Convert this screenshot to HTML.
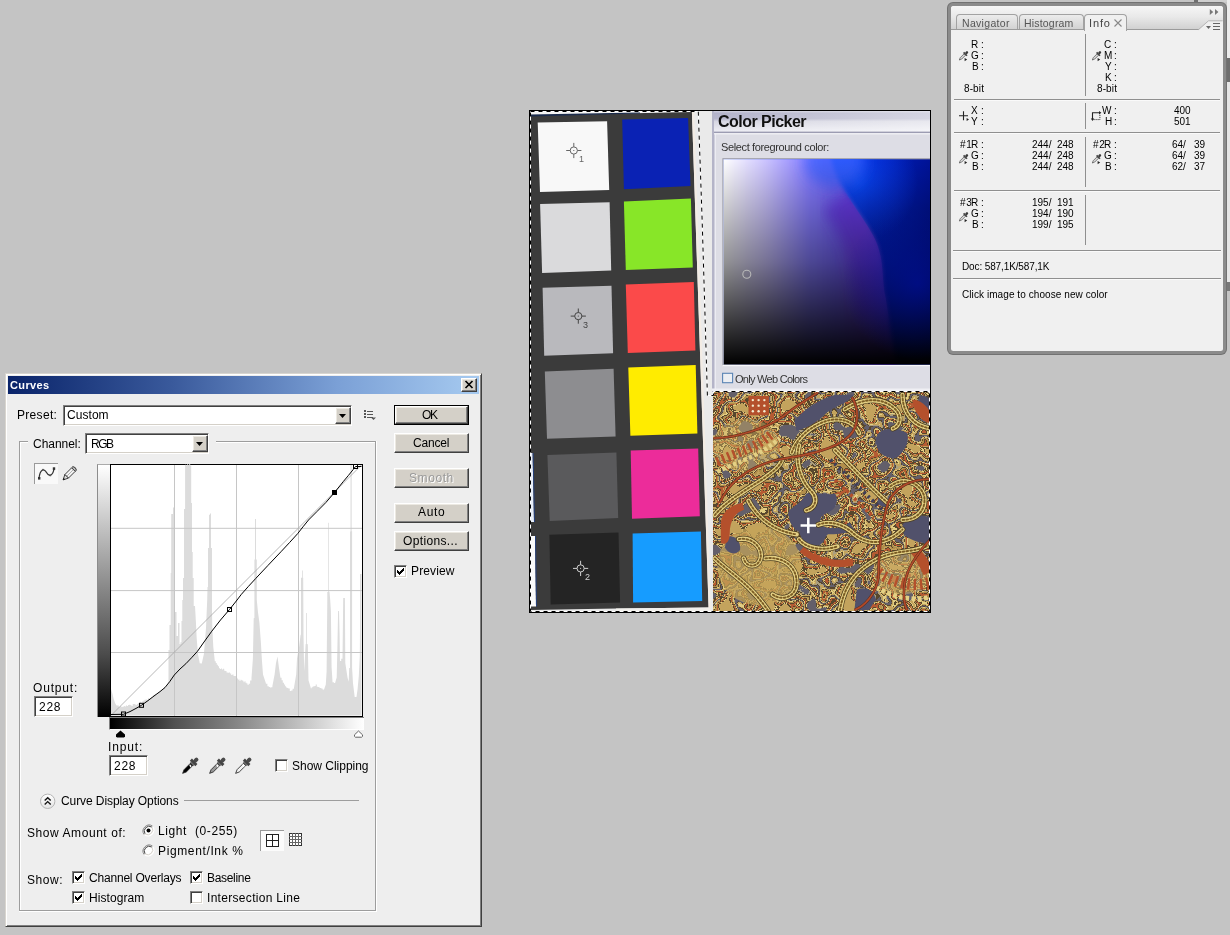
<!DOCTYPE html>
<html><head><meta charset="utf-8"><title>Curves</title>
<style>
html,body{margin:0;padding:0;}
body{width:1230px;height:935px;overflow:hidden;background:#c4c4c4;position:relative;font-family:"Liberation Sans",sans-serif;}
.t{position:absolute;white-space:pre;line-height:1;will-change:transform;font-family:"Liberation Sans",sans-serif;}
svg{position:absolute;overflow:visible;}
.btn{position:absolute;box-sizing:border-box;background:#d4d0c8;border:1px solid;border-color:#fff #404040 #404040 #fff;box-shadow:inset -1px -1px 0 #808080, inset 1px 1px 0 #ece9e2;}
.sunk{position:absolute;box-sizing:border-box;background:#fff;border:1px solid;border-color:#808080 #fff #fff #808080;box-shadow:inset 1px 1px 0 #404040, inset -1px -1px 0 #d4d0c8;}
.cb{position:absolute;box-sizing:border-box;width:13px;height:13px;background:#fff;border:1px solid;border-color:#808080 #fff #fff #808080;box-shadow:inset 1px 1px 0 #404040, inset -1px -1px 0 #d4d0c8;}
</style></head><body>
<!-- curves dialog -->
<div style="position:absolute;left:5px;top:373px;width:477px;height:554px;background:#eeeeee;box-sizing:border-box;border:1px solid;border-color:#d8d5cf #404040 #404040 #d8d5cf;box-shadow:inset 1px 1px 0 #fff, inset -1px -1px 0 #808080;"></div>
<div style="position:absolute;left:8px;top:376px;width:471px;height:18px;background:linear-gradient(to right,#0a246a 0%,#3a5a9c 35%,#7ba0d6 70%,#a6caf0 100%);"></div>
<span class="t" style="left:10.00px;top:380.00px;font-size:11px;color:#fff;letter-spacing:0.381px;font-weight:bold;">Curves</span>
<div class="btn" style="left:461px;top:378px;width:16px;height:14px;"></div>
<svg style="left:465px;top:381px" width="8" height="7" viewBox="0 0 8 7"><path d="M0.5,0 L7.5,7 M7.5,0 L0.5,7" stroke="#000" stroke-width="1.7" fill="none"/></svg>
<span class="t" style="left:17.00px;top:409.00px;font-size:12px;color:#000;letter-spacing:0.311px;">Preset:</span>
<div class="sunk" style="left:63px;top:405px;width:289px;height:21px;"></div>
<span class="t" style="left:67.00px;top:409.00px;font-size:12px;color:#000;letter-spacing:0.052px;">Custom</span>
<div class="btn" style="left:335px;top:407px;width:16px;height:17px;"></div>
<svg style="left:339px;top:414px" width="7" height="4" viewBox="0 0 7 4"><path d="M0,0H7L3.5,4Z" fill="#000"/></svg>
<svg style="left:364px;top:410px" width="13" height="10" viewBox="0 0 13 10" shape-rendering="crispEdges"><g fill="#555"><rect x="0" y="0" width="2" height="2"/><rect x="0" y="3" width="2" height="2"/><rect x="0" y="6" width="2" height="2"/><rect x="3" y="0.5" width="6" height="1"/><rect x="3" y="3.5" width="6" height="1"/><rect x="3" y="6.5" width="6" height="1"/></g><path d="M7,7.5H12L9.5,10Z" fill="#555" shape-rendering="auto"/></svg>
<div style="position:absolute;left:394px;top:405px;width:75px;height:20px;background:#000;"></div><div class="btn" style="left:395px;top:406px;width:73px;height:18px;"></div><span class="t" style="left:422.00px;top:409.00px;font-size:12px;color:#000;letter-spacing:-1.335px;">OK</span>
<div class="btn" style="left:394px;top:433px;width:75px;height:20px;"></div><span class="t" style="left:413.00px;top:437.00px;font-size:12px;color:#000;letter-spacing:-0.208px;">Cancel</span>
<div class="btn" style="left:394px;top:468px;width:75px;height:20px;"></div><span class="t" style="left:410.00px;top:473.00px;font-size:12px;color:#fff;letter-spacing:0.574px;">Smooth</span><span class="t" style="left:409.00px;top:472.00px;font-size:12px;color:#9a9a9a;letter-spacing:0.574px;">Smooth</span>
<div class="btn" style="left:394px;top:503px;width:75px;height:20px;"></div><span class="t" style="left:418.00px;top:506.00px;font-size:12px;color:#000;letter-spacing:0.648px;">Auto</span>
<div class="btn" style="left:394px;top:531px;width:75px;height:20px;"></div><span class="t" style="left:403.00px;top:535.00px;font-size:12px;color:#000;letter-spacing:0.346px;">Options...</span>
<div class="cb" style="left:394px;top:565px;"><svg style="left:2px;top:2px" width="7" height="7" viewBox="0 0 7 7" shape-rendering="crispEdges"><g fill="#000"><rect x="6" y="0" width="1" height="1"/><rect x="5" y="1" width="2" height="1"/><rect x="0" y="2" width="1" height="1"/><rect x="4" y="2" width="3" height="1"/><rect x="0" y="3" width="2" height="1"/><rect x="3" y="3" width="3" height="1"/><rect x="0" y="4" width="5" height="1"/><rect x="1" y="5" width="3" height="1"/><rect x="2" y="6" width="1" height="1"/></g></svg></div>
<span class="t" style="left:411.00px;top:565.00px;font-size:12px;color:#000;letter-spacing:0.129px;">Preview</span>
<div style="position:absolute;left:19px;top:441px;width:9px;height:1px;background:#9d9d9d;"></div>
<div style="position:absolute;left:20px;top:442px;width:8px;height:1px;background:#ffffff;"></div>
<div style="position:absolute;left:216px;top:441px;width:160px;height:1px;background:#9d9d9d;"></div>
<div style="position:absolute;left:216px;top:442px;width:159px;height:1px;background:#ffffff;"></div>
<div style="position:absolute;left:19px;top:441px;width:1px;height:470px;background:#9d9d9d;"></div>
<div style="position:absolute;left:20px;top:442px;width:1px;height:468px;background:#ffffff;"></div>
<div style="position:absolute;left:375px;top:441px;width:1px;height:470px;background:#9d9d9d;"></div>
<div style="position:absolute;left:376px;top:441px;width:1px;height:471px;background:#ffffff;"></div>
<div style="position:absolute;left:19px;top:910px;width:357px;height:1px;background:#9d9d9d;"></div>
<div style="position:absolute;left:19px;top:911px;width:358px;height:1px;background:#ffffff;"></div>
<span class="t" style="left:33.00px;top:438.00px;font-size:12px;color:#000;letter-spacing:-0.032px;">Channel:</span>
<div class="sunk" style="left:85px;top:433px;width:124px;height:21px;"></div>
<span class="t" style="left:91.00px;top:438.00px;font-size:12px;color:#000;letter-spacing:-1.444px;">RGB</span>
<div class="btn" style="left:192px;top:435px;width:16px;height:17px;"></div>
<svg style="left:196px;top:442px" width="7" height="4" viewBox="0 0 7 4"><path d="M0,0H7L3.5,4Z" fill="#000"/></svg>
<div style="position:absolute;left:34px;top:463px;width:24px;height:21px;background:#f9f9f9;box-sizing:border-box;border-top:1px solid #9a9a9a;border-left:1px solid #9a9a9a;"></div>
<svg style="left:37px;top:467px" width="19" height="14" viewBox="0 0 19 14"><path d="M2,11.5 C3,2 7,1 9.5,5.5 C12,10 16,9 17,1.5" stroke="#333" stroke-width="1.3" fill="none"/><rect x="1" y="10" width="2.4" height="2.6" fill="#333"/><rect x="15.8" y="0.3" width="2.4" height="2.6" fill="#333"/><circle cx="6" cy="2.6" r="0.9" fill="#555"/><circle cx="13.4" cy="8.4" r="0.9" fill="#555"/></svg>
<svg style="left:61px;top:465px" width="17" height="17" viewBox="0 0 17 17"><g transform="rotate(45 8.5 8.5)"><path d="M6,1.2 Q8.5,-0.6 11,1.2 V3 H6Z" fill="#bbb" stroke="#333" stroke-width="0.9"/><rect x="6" y="3" width="5" height="9.5" fill="#f4f4f4" stroke="#333" stroke-width="0.9"/><path d="M6,12.5 H11 L8.5,17.6Z" fill="#ddd" stroke="#333" stroke-width="0.9"/><path d="M7.7,15.8 L9.3,15.8 L8.5,17.6Z" fill="#000"/><line x1="8.5" y1="3.5" x2="8.5" y2="12" stroke="#999" stroke-width="0.7"/></g></svg>
<span class="t" style="left:33.00px;top:682.00px;font-size:12px;color:#000;letter-spacing:0.835px;">Output:</span>
<div class="sunk" style="left:34px;top:696px;width:39px;height:21px;"></div>
<span class="t" style="left:39.00px;top:701.00px;font-size:12px;color:#000;letter-spacing:0.703px;">228</span>
<span class="t" style="left:108.00px;top:741.00px;font-size:12px;color:#000;letter-spacing:0.877px;">Input:</span>
<div class="sunk" style="left:109px;top:755px;width:39px;height:21px;"></div>
<span class="t" style="left:114.00px;top:760.00px;font-size:12px;color:#000;letter-spacing:0.703px;">228</span>
<div style="position:absolute;left:97px;top:464px;width:13px;height:253px;background:linear-gradient(to bottom,#fff 0%,#c2c2c2 25%,#868686 50%,#4c4c4c 75%,#000 100%);box-sizing:border-box;border-left:1px solid #8c8c8c;border-top:1px solid #aaa;"></div>
<div style="position:absolute;left:109px;top:717px;width:255px;height:13px;background:linear-gradient(to right,#000 0%,#505050 25%,#868686 50%,#c2c2c2 75%,#fff 100%);box-sizing:border-box;border-top:1px solid #808080;border-left:1px solid #808080;border-bottom:1px solid #fff;"></div>
<div style="position:absolute;left:110px;top:464px;width:253px;height:253px;background:#fff;box-sizing:border-box;border:1px solid #000;"></div>
<svg style="left:0;top:0" width="1230" height="935" viewBox="0 0 1230 935"><polygon points="111.0,715.5 111.0,689.0 112.5,694.0 113.7,699.0 115.0,703.0 116.5,705.6 116.5,705.4 117.7,705.4 117.7,705.5 118.8,705.5 118.8,707.1 120.0,707.1 120.0,707.0 120.0,706.1 121.3,706.1 121.3,707.1 122.5,707.1 122.5,706.7 123.8,706.7 123.8,707.0 123.8,705.9 124.8,705.9 124.8,706.6 125.9,706.6 125.9,705.4 127.0,705.4 127.0,706.0 128.0,706.0 128.0,706.0 128.0,704.9 129.2,704.9 129.2,704.7 130.4,704.7 130.4,705.2 131.5,705.2 131.5,705.9 132.7,705.9 132.7,704.1 133.9,704.1 133.9,704.8 133.9,704.0 134.9,704.0 134.9,704.6 135.9,704.6 135.9,705.0 136.9,705.0 136.9,703.9 138.0,703.9 138.0,703.2 139.0,703.2 139.0,704.2 140.0,704.2 140.0,703.0 140.0,701.7 141.2,701.7 141.2,703.0 142.3,703.0 142.3,701.2 143.4,701.2 143.4,700.4 144.6,700.4 144.6,699.8 145.8,699.8 145.8,699.6 146.9,699.6 146.9,699.8 146.9,700.2 147.9,700.2 147.9,698.3 148.9,698.3 148.9,698.6 149.9,698.6 149.9,698.2 151.0,698.2 151.0,697.1 152.0,697.1 152.0,696.9 153.0,696.9 153.0,695.3 154.0,695.3 154.0,696.0 154.0,694.7 155.0,694.7 155.0,694.2 156.0,694.2 156.0,694.5 157.0,694.5 157.0,693.2 158.0,693.2 158.0,692.2 159.0,692.2 159.0,692.1 160.0,692.1 160.0,691.5 160.0,691.0 161.0,691.0 161.0,689.9 162.0,689.9 162.0,690.1 163.0,690.1 163.0,689.1 164.0,689.1 164.0,687.3 165.0,687.3 165.0,687.5 165.0,686.9 166.2,686.9 166.2,685.3 167.3,685.3 167.3,684.6 168.5,684.6 168.5,683.0 168.5,650.0 169.5,650.0 169.5,625.0 170.7,625.0 170.7,573.0 171.2,573.0 171.2,514.0 173.0,514.0 173.0,507.0 173.0,507.5 174.0,507.5 174.0,506.5 175.0,506.5 175.0,507.0 175.0,612.0 176.5,612.0 176.5,636.0 178.0,636.0 178.0,623.0 179.5,623.0 179.5,643.0 179.5,644.1 180.5,644.1 180.5,642.2 181.5,642.2 181.5,643.0 181.5,621.0 182.3,621.0 182.3,600.0 183.0,600.0 183.0,578.0 184.0,578.0 184.0,509.0 185.1,509.0 185.1,465.0 185.1,464.8 186.1,464.8 186.1,465.6 187.1,465.6 187.1,464.2 188.1,464.2 188.1,465.0 189.2,465.0 189.2,464.0 190.2,464.0 190.2,465.4 191.2,465.4 191.2,465.0 191.2,503.0 192.0,503.0 192.0,552.0 192.7,552.0 192.7,578.0 193.7,578.0 193.7,606.0 195.0,606.0 196.0,624.0 196.7,638.4 198.0,654.3 199.6,662.2 199.6,663.2 200.6,663.2 200.6,663.5 201.7,663.5 201.7,663.7 203.9,654.0 206.0,628.0 207.2,600.0 207.5,587.0 208.0,587.0 208.0,548.0 209.0,548.0 209.0,514.0 209.0,514.8 210.0,514.8 210.0,513.6 211.0,513.6 211.0,514.0 211.0,548.0 212.0,548.0 212.0,612.0 212.3,628.0 213.3,647.0 214.7,660.0 214.7,661.3 215.8,661.3 215.8,662.9 216.8,662.9 216.8,664.7 217.9,664.7 217.9,666.3 219.0,666.3 219.0,667.3 219.0,668.3 220.0,668.3 220.0,669.1 221.0,669.1 221.0,668.6 222.0,668.6 222.0,669.6 223.0,669.6 223.0,669.5 223.0,668.8 224.2,668.8 224.2,670.7 225.3,670.7 225.3,671.1 226.5,671.1 226.5,672.4 227.7,672.4 227.7,671.6 227.7,672.7 228.9,672.7 228.9,672.4 230.0,672.4 230.0,673.5 231.2,673.5 231.2,675.1 232.3,675.1 232.3,674.5 233.5,674.5 233.5,676.0 233.5,676.1 234.7,676.1 234.7,676.0 235.8,676.0 235.8,676.3 237.0,676.3 237.0,677.4 238.5,680.3 238.5,679.4 239.5,679.4 239.5,681.1 240.5,681.1 240.5,679.8 241.5,679.8 241.5,680.2 242.5,680.2 242.5,680.7 243.5,680.7 243.5,681.0 243.5,682.2 244.5,682.2 244.5,681.2 245.5,681.2 245.5,682.7 246.6,682.7 246.6,683.6 247.6,683.6 247.6,685.1 248.6,685.1 248.6,684.6 248.6,683.7 250.1,683.7 250.1,680.5 251.5,680.5 251.5,678.0 252.9,658.6 253.7,618.2 254.4,618.0 254.4,559.6 255.0,559.6 255.0,519.0 256.0,519.0 256.0,559.6 256.8,559.6 256.8,600.0 258.0,612.4 259.4,622.5 260.9,642.8 261.9,660.0 263.0,674.5 265.9,683.2 265.9,683.8 267.4,683.8 267.4,686.2 268.8,686.2 268.8,687.5 268.8,686.9 270.0,686.9 270.0,687.6 271.2,687.6 271.2,687.3 272.4,687.3 272.4,686.0 274.6,674.5 276.0,663.0 277.5,656.5 278.9,667.3 280.4,677.4 280.4,677.8 281.6,677.8 281.6,680.3 282.8,680.3 282.8,682.8 284.0,682.8 284.0,684.6 284.0,684.6 285.1,684.6 285.1,686.2 286.1,686.2 286.1,687.5 287.2,687.5 287.2,687.9 288.3,687.9 288.3,689.0 288.3,688.6 289.8,688.6 289.8,690.9 291.2,690.9 291.2,691.8 291.2,690.4 292.6,690.4 292.6,688.7 294.0,688.7 294.0,687.5 296.2,674.5 297.0,658.6 299.1,647.0 300.6,634.8 301.0,634.8 301.0,577.7 302.0,577.7 302.0,570.5 302.8,570.5 302.8,577.7 303.2,577.7 303.5,634.8 304.2,671.6 305.6,644.2 306.0,644.0 306.0,613.0 306.8,613.0 306.8,644.0 307.8,644.2 308.5,680.3 310.7,687.5 310.7,688.3 311.7,688.3 311.7,687.3 312.7,687.3 312.7,686.4 313.7,686.4 313.7,686.2 314.7,686.2 314.7,685.9 315.7,685.9 315.7,685.3 315.7,684.5 316.8,684.5 316.8,686.7 317.9,686.7 317.9,686.9 318.9,686.9 318.9,687.4 320.0,687.4 320.0,686.8 320.0,688.1 321.2,688.1 321.2,688.4 322.5,688.4 322.5,689.6 323.7,689.6 323.7,690.4 325.8,684.6 326.6,671.6 327.3,600.0 327.3,592.0 328.0,592.0 329.5,591.5 330.2,600.0 330.9,611.0 331.6,667.3 332.6,683.2 332.6,682.2 333.9,682.2 333.9,683.0 335.2,683.0 335.2,682.5 336.7,677.4 337.4,647.0 338.1,611.0 339.0,611.0 339.6,634.8 340.0,663.0 340.0,660.9 341.2,660.9 341.2,658.7 342.5,658.7 342.5,658.6 343.2,599.4 343.2,598.0 344.9,598.0 345.3,663.0 347.5,677.4 348.7,681.7 349.2,668.0 350.0,668.0 350.0,532.0 350.0,531.4 351.1,531.4 351.1,531.3 352.1,531.3 352.1,532.0 352.1,668.0 353.0,683.2 354.7,697.0 356.5,697.0 357.6,689.0 358.8,676.0 359.8,655.7 360.0,628.0 360.0,574.0 361.5,574.0 361.5,715.5" fill="#dcdcdc"/><rect x="328" y="522.8" width="1" height="70" fill="#dcdcdc" fill-opacity="0.75"/><rect x="350.4" y="465" width="1.4" height="68" fill="#dcdcdc" fill-opacity="0.8"/><line x1="174.5" y1="465" x2="174.5" y2="716" stroke="#c6c6c6" stroke-width="1"/><line x1="236.5" y1="465" x2="236.5" y2="716" stroke="#c6c6c6" stroke-width="1"/><line x1="298.5" y1="465" x2="298.5" y2="716" stroke="#c6c6c6" stroke-width="1"/><line x1="111" y1="528.3" x2="362" y2="528.3" stroke="#c6c6c6" stroke-width="1"/><line x1="111" y1="590.6" x2="362" y2="590.6" stroke="#c6c6c6" stroke-width="1"/><line x1="111" y1="652.5" x2="362" y2="652.5" stroke="#c6c6c6" stroke-width="1"/><line x1="111" y1="715.5" x2="361.5" y2="465" stroke="#a4a4a4" stroke-width="0.8"/><polyline points="111.0,714.5 123.5,714.3 130.0,711.6 136.0,708.4 141.5,705.3 148.0,700.6 154.0,696.0 160.0,691.6 165.0,687.5 169.8,681.5 174.3,675.0 180.0,669.0 185.9,663.7 191.5,657.8 197.4,651.4 204.0,642.0 211.8,631.2 220.5,620.0 229.5,609.5 235.5,602.0 241.4,594.3 248.5,586.3 255.8,578.4 268.0,565.4 281.0,551.7 289.5,542.6 297.7,533.6 303.0,526.8 308.5,520.0 317.2,511.3 325.8,502.6 334.5,492.5 343.2,481.7 348.3,475.6 353.3,469.4 355.5,466.5 361.5,466.5" fill="none" stroke="#000" stroke-width="1.0" stroke-linejoin="round"/><rect x="121.5" y="712.0" width="4" height="4" fill="none" stroke="#000" stroke-width="1"/><rect x="139.5" y="703.3" width="4" height="4" fill="none" stroke="#000" stroke-width="1"/><rect x="227.5" y="607.5" width="4" height="4" fill="none" stroke="#000" stroke-width="1"/><rect x="353.5" y="464.5" width="4" height="4" fill="none" stroke="#000" stroke-width="1"/><rect x="332" y="490" width="5" height="5" fill="#000"/><path d="M120.5,730.4 L125,734.6 V736.4 L124,737.5 H117 L116,736.4 V734.6 Z" fill="#000"/><path d="M358.5,731 L362.5,734.8 V736.4 L361.6,737.2 H355.4 L354.5,736.4 V734.8 Z" fill="#fff" stroke="#555" stroke-width="0.9"/></svg>
<svg style="left:182px;top:757px" width="17" height="17" viewBox="0 0 17 17"><g transform="rotate(45 8.5 8.5)"><rect x="6.6" y="-1.8" width="3.8" height="5" rx="1.6" fill="#4a4a4a"/><rect x="4.6" y="2.6" width="7.8" height="3" fill="#444"/><rect x="6.2" y="5.2" width="4.6" height="2" fill="#666"/><path d="M6.9,7 H10.1 V16 L8.5,19.6 L6.9,16 Z" fill="#000" stroke="#222" stroke-width="0.8"/><path d="M7.3,8 H9.7 V10 L7.3,9 Z" fill="#fff"/></g></svg>
<svg style="left:208.5px;top:757px" width="17" height="17" viewBox="0 0 17 17"><g transform="rotate(45 8.5 8.5)"><rect x="6.6" y="-1.8" width="3.8" height="5" rx="1.6" fill="#4a4a4a"/><rect x="4.6" y="2.6" width="7.8" height="3" fill="#444"/><rect x="6.2" y="5.2" width="4.6" height="2" fill="#666"/><path d="M6.9,7 H10.1 V16 L8.5,19.6 L6.9,16 Z" fill="#9a9a9a" stroke="#222" stroke-width="0.8"/><path d="M7.3,8 H9.7 V10 L7.3,9 Z" fill="#fff"/></g></svg>
<svg style="left:235px;top:757px" width="17" height="17" viewBox="0 0 17 17"><g transform="rotate(45 8.5 8.5)"><rect x="6.6" y="-1.8" width="3.8" height="5" rx="1.6" fill="#4a4a4a"/><rect x="4.6" y="2.6" width="7.8" height="3" fill="#444"/><rect x="6.2" y="5.2" width="4.6" height="2" fill="#666"/><path d="M6.9,7 H10.1 V16 L8.5,19.6 L6.9,16 Z" fill="#f4f4f4" stroke="#222" stroke-width="0.8"/><path d="M7.3,8 H9.7 V10 L7.3,9 Z" fill="#fff"/></g></svg>
<div class="cb" style="left:275px;top:759px;"></div>
<span class="t" style="left:292.00px;top:760.00px;font-size:12px;color:#000;letter-spacing:-0.016px;">Show Clipping</span>
<svg style="left:39px;top:793px" width="17" height="17" viewBox="0 0 17 17"><defs><linearGradient id="cg" x1="0" y1="0" x2="0" y2="1"><stop offset="0" stop-color="#fff"/><stop offset="1" stop-color="#e4e4e4"/></linearGradient></defs><circle cx="8.7" cy="8.3" r="7.2" fill="url(#cg)" stroke="#b4b4b4" stroke-width="1"/><path d="M5.7,7.6 L8.7,4.8 L11.7,7.6 M5.7,11.4 L8.7,8.6 L11.7,11.4" stroke="#111" stroke-width="1.4" fill="none"/></svg>
<span class="t" style="left:61.00px;top:795.00px;font-size:12px;color:#000;letter-spacing:-0.087px;">Curve Display Options</span>
<div style="position:absolute;left:184px;top:800px;width:175px;height:1px;background:#9d9d9d;"></div>
<span class="t" style="left:27.00px;top:827.00px;font-size:12px;color:#000;letter-spacing:0.566px;">Show Amount of:</span>
<svg style="left:142px;top:823.5px" width="13" height="13" viewBox="0 0 13 13"><circle cx="6.5" cy="6.5" r="5.6" fill="#fff"/><path d="M2.3,10.7 A6,6 0 0 1 10.7,2.3" stroke="#808080" stroke-width="1" fill="none"/><path d="M3.1,9.9 A4.9,4.9 0 0 1 9.9,3.1" stroke="#404040" stroke-width="1" fill="none"/><path d="M10.7,2.3 A6,6 0 0 1 2.3,10.7" stroke="#fff" stroke-width="1" fill="none"/><path d="M9.9,3.1 A4.9,4.9 0 0 1 3.1,9.9" stroke="#d4d0c8" stroke-width="1" fill="none"/><circle cx="6.5" cy="6.5" r="2" fill="#000"/></svg>
<svg style="left:142px;top:843.5px" width="13" height="13" viewBox="0 0 13 13"><circle cx="6.5" cy="6.5" r="5.6" fill="#fff"/><path d="M2.3,10.7 A6,6 0 0 1 10.7,2.3" stroke="#808080" stroke-width="1" fill="none"/><path d="M3.1,9.9 A4.9,4.9 0 0 1 9.9,3.1" stroke="#404040" stroke-width="1" fill="none"/><path d="M10.7,2.3 A6,6 0 0 1 2.3,10.7" stroke="#fff" stroke-width="1" fill="none"/><path d="M9.9,3.1 A4.9,4.9 0 0 1 3.1,9.9" stroke="#d4d0c8" stroke-width="1" fill="none"/></svg>
<span class="t" style="left:158.00px;top:825.00px;font-size:12px;color:#000;letter-spacing:0.605px;">Light  (0-255)</span>
<span class="t" style="left:158.00px;top:845.00px;font-size:12px;color:#000;letter-spacing:0.629px;">Pigment/Ink %</span>
<div style="position:absolute;left:260px;top:830px;width:24px;height:21px;background:#fbfbfb;box-sizing:border-box;border-top:1px solid #9a9a9a;border-left:1px solid #9a9a9a;"></div>
<svg style="left:266px;top:834px" width="13" height="13" viewBox="0 0 13 13" shape-rendering="crispEdges"><rect x="0.5" y="0.5" width="12" height="12" fill="#fff" stroke="#222"/><path d="M6.5,0V13M0,6.5H13" stroke="#222"/></svg>
<svg style="left:289px;top:833px" width="13" height="13" viewBox="0 0 13 13" shape-rendering="crispEdges"><rect x="0.5" y="0.5" width="12" height="12" fill="#fff" stroke="#333"/><path d="M3.5,0V13M6.5,0V13M9.5,0V13M0,3.5H13M0,6.5H13M0,9.5H13" stroke="#666"/></svg>
<span class="t" style="left:27.00px;top:874.00px;font-size:12px;color:#000;letter-spacing:0.572px;">Show:</span>
<div class="cb" style="left:72px;top:871px;"><svg style="left:2px;top:2px" width="7" height="7" viewBox="0 0 7 7" shape-rendering="crispEdges"><g fill="#000"><rect x="6" y="0" width="1" height="1"/><rect x="5" y="1" width="2" height="1"/><rect x="0" y="2" width="1" height="1"/><rect x="4" y="2" width="3" height="1"/><rect x="0" y="3" width="2" height="1"/><rect x="3" y="3" width="3" height="1"/><rect x="0" y="4" width="5" height="1"/><rect x="1" y="5" width="3" height="1"/><rect x="2" y="6" width="1" height="1"/></g></svg></div>
<span class="t" style="left:89.00px;top:872.00px;font-size:12px;color:#000;letter-spacing:-0.195px;">Channel Overlays</span>
<div class="cb" style="left:72px;top:891px;"><svg style="left:2px;top:2px" width="7" height="7" viewBox="0 0 7 7" shape-rendering="crispEdges"><g fill="#000"><rect x="6" y="0" width="1" height="1"/><rect x="5" y="1" width="2" height="1"/><rect x="0" y="2" width="1" height="1"/><rect x="4" y="2" width="3" height="1"/><rect x="0" y="3" width="2" height="1"/><rect x="3" y="3" width="3" height="1"/><rect x="0" y="4" width="5" height="1"/><rect x="1" y="5" width="3" height="1"/><rect x="2" y="6" width="1" height="1"/></g></svg></div>
<span class="t" style="left:89.00px;top:892.00px;font-size:12px;color:#000;letter-spacing:0.062px;">Histogram</span>
<div class="cb" style="left:190px;top:871px;"><svg style="left:2px;top:2px" width="7" height="7" viewBox="0 0 7 7" shape-rendering="crispEdges"><g fill="#000"><rect x="6" y="0" width="1" height="1"/><rect x="5" y="1" width="2" height="1"/><rect x="0" y="2" width="1" height="1"/><rect x="4" y="2" width="3" height="1"/><rect x="0" y="3" width="2" height="1"/><rect x="3" y="3" width="3" height="1"/><rect x="0" y="4" width="5" height="1"/><rect x="1" y="5" width="3" height="1"/><rect x="2" y="6" width="1" height="1"/></g></svg></div>
<span class="t" style="left:207.00px;top:872.00px;font-size:12px;color:#000;letter-spacing:-0.316px;">Baseline</span>
<div class="cb" style="left:190px;top:891px;"></div>
<span class="t" style="left:207.00px;top:892.00px;font-size:12px;color:#000;letter-spacing:0.306px;">Intersection Line</span>
<!-- info panel -->
<div style="position:absolute;left:1198px;top:0px;width:29px;height:2px;background:#cfcfcf;"></div>
<div style="position:absolute;left:1194px;top:0px;width:4px;height:6px;background:#6f6f6f;"></div>
<div style="position:absolute;left:1227px;top:0px;width:3px;height:58px;background:#ececec;"></div>
<div style="position:absolute;left:1227px;top:58px;width:3px;height:24px;background:#6e6e6e;"></div>
<div style="position:absolute;left:1227px;top:82px;width:3px;height:200px;background:#e6e6e6;"></div>
<div style="position:absolute;left:1227px;top:282px;width:3px;height:9px;background:#787878;"></div>
<div style="position:absolute;left:947px;top:2px;width:280px;height:353px;background:#727272;border-radius:6px;"></div>
<div style="position:absolute;left:948px;top:3px;width:278px;height:351px;background:#8b8b8b;border-radius:5px;"></div>
<div style="position:absolute;left:950.7px;top:5.7px;width:272.3px;height:345.5px;background:#f0f0f0;border-radius:2.5px;"></div>
<div style="position:absolute;left:950.7px;top:5.7px;width:272.3px;height:24.3px;background:linear-gradient(to bottom,#f6f6f6 0%,#e9e9e9 45%,#cfcfcf 100%);border-radius:2.5px 2.5px 0 0;"></div>
<div style="position:absolute;left:950.7px;top:29px;width:248.5px;height:1px;background:#9b9b9b;"></div>
<svg style="left:0;top:0" width="1230" height="40" viewBox="0 0 1230 40"><path d="M1198.5,30 L1208.5,20.6 H1223 V30 Z" fill="#f0f0f0"/><path d="M1198.5,29.6 L1208.5,20.8 H1222.6" fill="none" stroke="#b5b5b5" stroke-width="1"/><path d="M1209.8,9 L1213.2,12 L1209.8,15 Z M1215,9 L1218.4,12 L1215,15 Z" fill="#777"/><path d="M1206,26 H1211 L1208.5,29 Z" fill="#666"/><path d="M1213,23.5 H1220 M1213,26.5 H1220 M1213,29.5 H1220" stroke="#666" stroke-width="1"/></svg>
<div style="position:absolute;left:956px;top:14px;width:62px;height:15px;box-sizing:border-box;background:linear-gradient(to bottom,#ececec,#d2d2d2);border:1px solid #a2a2a2;border-bottom:none;border-radius:4px 4px 0 0;"></div>
<div style="position:absolute;left:1018.5px;top:14px;width:65px;height:15px;box-sizing:border-box;background:linear-gradient(to bottom,#ececec,#d2d2d2);border:1px solid #a2a2a2;border-bottom:none;border-radius:4px 4px 0 0;"></div>
<div style="position:absolute;left:1083.5px;top:14px;width:43px;height:16.5px;box-sizing:border-box;background:#f0f0f0;border:1px solid #a2a2a2;border-bottom:none;border-radius:4px 4px 0 0;"></div>
<span class="t" style="left:962.00px;top:18.00px;font-size:10.5px;color:#555;letter-spacing:0.313px;">Navigator</span>
<span class="t" style="left:1024.00px;top:18.00px;font-size:10.5px;color:#555;letter-spacing:0.189px;">Histogram</span>
<span class="t" style="left:1089.00px;top:18.00px;font-size:11px;color:#444;letter-spacing:0.877px;">Info</span>
<svg style="left:1114px;top:18.5px" width="8" height="8" viewBox="0 0 8 8"><path d="M0.5,0.5 L7.5,7.5 M7.5,0.5 L0.5,7.5" stroke="#888" stroke-width="1.1"/></svg>
<div style="position:absolute;left:954px;top:99px;width:266px;height:1px;background:#8f8f8f;"></div><div style="position:absolute;left:954px;top:100px;width:266px;height:1px;background:#fafafa;"></div>
<div style="position:absolute;left:954px;top:132px;width:266px;height:1px;background:#8f8f8f;"></div><div style="position:absolute;left:954px;top:133px;width:266px;height:1px;background:#fafafa;"></div>
<div style="position:absolute;left:954px;top:190px;width:266px;height:1px;background:#8f8f8f;"></div><div style="position:absolute;left:954px;top:191px;width:266px;height:1px;background:#fafafa;"></div>
<div style="position:absolute;left:953px;top:250px;width:268px;height:1px;background:#8f8f8f;"></div><div style="position:absolute;left:953px;top:251px;width:268px;height:1px;background:#fafafa;"></div>
<div style="position:absolute;left:953px;top:278px;width:268px;height:1px;background:#8f8f8f;"></div><div style="position:absolute;left:953px;top:279px;width:268px;height:1px;background:#fafafa;"></div>
<div style="position:absolute;left:1085px;top:34px;width:1px;height:62px;background:#8f8f8f;"></div>
<div style="position:absolute;left:1085px;top:103px;width:1px;height:26px;background:#8f8f8f;"></div>
<div style="position:absolute;left:1085px;top:137px;width:1px;height:50px;background:#8f8f8f;"></div>
<div style="position:absolute;left:1085px;top:195px;width:1px;height:50px;background:#8f8f8f;"></div>
<span class="t" style="left:971px;top:40px;font-size:10px;color:#000;">R</span><span class="t" style="left:981.00px;top:40.00px;font-size:10px;color:#000;">:</span>
<span class="t" style="left:971px;top:51px;font-size:10px;color:#000;">G</span><span class="t" style="left:981.00px;top:51.00px;font-size:10px;color:#000;">:</span>
<span class="t" style="left:972px;top:62px;font-size:10px;color:#000;">B</span><span class="t" style="left:981.00px;top:62.00px;font-size:10px;color:#000;">:</span>
<span class="t" style="left:1104px;top:40px;font-size:10px;color:#000;">C</span><span class="t" style="left:1114.00px;top:40.00px;font-size:10px;color:#000;">:</span>
<span class="t" style="left:1104px;top:51px;font-size:10px;color:#000;">M</span><span class="t" style="left:1114.00px;top:51.00px;font-size:10px;color:#000;">:</span>
<span class="t" style="left:1105px;top:62px;font-size:10px;color:#000;">Y</span><span class="t" style="left:1114.00px;top:62.00px;font-size:10px;color:#000;">:</span>
<span class="t" style="left:1105px;top:73px;font-size:10px;color:#000;">K</span><span class="t" style="left:1114.00px;top:73.00px;font-size:10px;color:#000;">:</span>
<span class="t" style="left:964.00px;top:84.00px;font-size:10px;color:#000;letter-spacing:0.114px;">8-bit</span>
<span class="t" style="left:1097.00px;top:84.00px;font-size:10px;color:#000;letter-spacing:0.114px;">8-bit</span>
<span class="t" style="left:971px;top:106px;font-size:10px;color:#000;">X</span><span class="t" style="left:981.00px;top:106.00px;font-size:10px;color:#000;">:</span>
<span class="t" style="left:971px;top:117px;font-size:10px;color:#000;">Y</span><span class="t" style="left:981.00px;top:117.00px;font-size:10px;color:#000;">:</span>
<span class="t" style="left:1102px;top:106px;font-size:10px;color:#000;">W</span><span class="t" style="left:1114.00px;top:106.00px;font-size:10px;color:#000;">:</span>
<span class="t" style="left:1105px;top:117px;font-size:10px;color:#000;">H</span><span class="t" style="left:1114.00px;top:117.00px;font-size:10px;color:#000;">:</span>
<span class="t" style="left:1174px;top:106px;font-size:10px;color:#000;">400</span>
<span class="t" style="left:1174px;top:117px;font-size:10px;color:#000;">501</span>
<span class="t" style="left:960.00px;top:140.00px;font-size:10px;color:#000;letter-spacing:0.710px;">#1</span><span class="t" style="left:971px;top:140px;font-size:10px;color:#000;">R</span><span class="t" style="left:981.00px;top:140.00px;font-size:10px;color:#000;">:</span><span class="t" style="left:1032px;top:140px;font-size:10px;color:#000;">244/</span><span class="t" style="left:1057px;top:140px;font-size:10px;color:#000;">248</span><span class="t" style="left:971px;top:151px;font-size:10px;color:#000;">G</span><span class="t" style="left:981.00px;top:151.00px;font-size:10px;color:#000;">:</span><span class="t" style="left:1032px;top:151px;font-size:10px;color:#000;">244/</span><span class="t" style="left:1057px;top:151px;font-size:10px;color:#000;">248</span><span class="t" style="left:972px;top:162px;font-size:10px;color:#000;">B</span><span class="t" style="left:981.00px;top:162.00px;font-size:10px;color:#000;">:</span><span class="t" style="left:1032px;top:162px;font-size:10px;color:#000;">244/</span><span class="t" style="left:1057px;top:162px;font-size:10px;color:#000;">248</span>
<span class="t" style="left:1093.00px;top:140.00px;font-size:10px;color:#000;letter-spacing:0.725px;">#2</span><span class="t" style="left:1104px;top:140px;font-size:10px;color:#000;">R</span><span class="t" style="left:1114.00px;top:140.00px;font-size:10px;color:#000;">:</span><span class="t" style="left:1172px;top:140px;font-size:10px;color:#000;">64/</span><span class="t" style="left:1194px;top:140px;font-size:10px;color:#000;">39</span><span class="t" style="left:1104px;top:151px;font-size:10px;color:#000;">G</span><span class="t" style="left:1114.00px;top:151.00px;font-size:10px;color:#000;">:</span><span class="t" style="left:1172px;top:151px;font-size:10px;color:#000;">64/</span><span class="t" style="left:1194px;top:151px;font-size:10px;color:#000;">39</span><span class="t" style="left:1105px;top:162px;font-size:10px;color:#000;">B</span><span class="t" style="left:1114.00px;top:162.00px;font-size:10px;color:#000;">:</span><span class="t" style="left:1172px;top:162px;font-size:10px;color:#000;">62/</span><span class="t" style="left:1194px;top:162px;font-size:10px;color:#000;">37</span>
<span class="t" style="left:960.00px;top:198.00px;font-size:10px;color:#000;letter-spacing:0.662px;">#3</span><span class="t" style="left:971px;top:198px;font-size:10px;color:#000;">R</span><span class="t" style="left:981.00px;top:198.00px;font-size:10px;color:#000;">:</span><span class="t" style="left:1032px;top:198px;font-size:10px;color:#000;">195/</span><span class="t" style="left:1057px;top:198px;font-size:10px;color:#000;">191</span><span class="t" style="left:971px;top:209px;font-size:10px;color:#000;">G</span><span class="t" style="left:981.00px;top:209.00px;font-size:10px;color:#000;">:</span><span class="t" style="left:1032px;top:209px;font-size:10px;color:#000;">194/</span><span class="t" style="left:1057px;top:209px;font-size:10px;color:#000;">190</span><span class="t" style="left:972px;top:220px;font-size:10px;color:#000;">B</span><span class="t" style="left:981.00px;top:220.00px;font-size:10px;color:#000;">:</span><span class="t" style="left:1032px;top:220px;font-size:10px;color:#000;">199/</span><span class="t" style="left:1057px;top:220px;font-size:10px;color:#000;">195</span>
<span class="t" style="left:962.00px;top:262.00px;font-size:10px;color:#000;letter-spacing:-0.122px;">Doc: 587,1K/587,1K</span>
<span class="t" style="left:962.00px;top:290.00px;font-size:10px;color:#000;letter-spacing:0.076px;">Click image to choose new color</span>
<svg style="left:958.3px;top:51px" width="12" height="12" viewBox="0 0 12 12"><g transform="translate(0.2,0) rotate(45 5 5)"><rect x="3.9" y="-1.4" width="2.4" height="3" rx="1.1" fill="#3a3a3a"/><rect x="2.7" y="1.3" width="4.8" height="1.7" fill="#444"/><path d="M4.1,3 H6.1 V8.3 L5.1,10.6 L4.1,8.3 Z" fill="#d8d8d8" stroke="#555" stroke-width="0.7"/></g><path d="M6.6,6.9 L9.2,8.6 L6.6,10.3 Z" fill="#222"/></svg>
<svg style="left:1091px;top:51px" width="12" height="12" viewBox="0 0 12 12"><g transform="translate(0.2,0) rotate(45 5 5)"><rect x="3.9" y="-1.4" width="2.4" height="3" rx="1.1" fill="#3a3a3a"/><rect x="2.7" y="1.3" width="4.8" height="1.7" fill="#444"/><path d="M4.1,3 H6.1 V8.3 L5.1,10.6 L4.1,8.3 Z" fill="#d8d8d8" stroke="#555" stroke-width="0.7"/></g><path d="M6.6,6.9 L9.2,8.6 L6.6,10.3 Z" fill="#222"/></svg>
<svg style="left:958.3px;top:153.5px" width="12" height="12" viewBox="0 0 12 12"><g transform="translate(0.2,0) rotate(45 5 5)"><rect x="3.9" y="-1.4" width="2.4" height="3" rx="1.1" fill="#3a3a3a"/><rect x="2.7" y="1.3" width="4.8" height="1.7" fill="#444"/><path d="M4.1,3 H6.1 V8.3 L5.1,10.6 L4.1,8.3 Z" fill="#d8d8d8" stroke="#555" stroke-width="0.7"/></g><path d="M6.6,6.9 L9.2,8.6 L6.6,10.3 Z" fill="#222"/></svg>
<svg style="left:1091px;top:153.5px" width="12" height="12" viewBox="0 0 12 12"><g transform="translate(0.2,0) rotate(45 5 5)"><rect x="3.9" y="-1.4" width="2.4" height="3" rx="1.1" fill="#3a3a3a"/><rect x="2.7" y="1.3" width="4.8" height="1.7" fill="#444"/><path d="M4.1,3 H6.1 V8.3 L5.1,10.6 L4.1,8.3 Z" fill="#d8d8d8" stroke="#555" stroke-width="0.7"/></g><path d="M6.6,6.9 L9.2,8.6 L6.6,10.3 Z" fill="#222"/></svg>
<svg style="left:958.3px;top:211.5px" width="12" height="12" viewBox="0 0 12 12"><g transform="translate(0.2,0) rotate(45 5 5)"><rect x="3.9" y="-1.4" width="2.4" height="3" rx="1.1" fill="#3a3a3a"/><rect x="2.7" y="1.3" width="4.8" height="1.7" fill="#444"/><path d="M4.1,3 H6.1 V8.3 L5.1,10.6 L4.1,8.3 Z" fill="#d8d8d8" stroke="#555" stroke-width="0.7"/></g><path d="M6.6,6.9 L9.2,8.6 L6.6,10.3 Z" fill="#222"/></svg>
<svg style="left:958px;top:110px" width="13" height="13" viewBox="0 0 13 13"><path d="M5.5,1.3 V10.3 M1,5.8 H10" stroke="#222" stroke-width="1.1"/><path d="M8.6,8 L11,9.5 L8.6,11 Z" fill="#222"/></svg>
<svg style="left:1091px;top:111px" width="12" height="11" viewBox="0 0 12 11"><path d="M1.5,8.2 V1.7 H8.6" stroke="#222" stroke-width="1.1" fill="none"/><path d="M2.6,8.6 H8.9 V3" stroke="#222" stroke-width="1" stroke-dasharray="1,1" fill="none"/><path d="M8,0 L10.4,1.7 L8,3.4 Z M-0.2,7.6 H3.2 L1.5,10 Z" fill="#222"/></svg>
<!-- image -->
<div style="position:absolute;left:529px;top:110px;width:402px;height:503px;background:#000;"></div>
<div style="position:absolute;left:530px;top:111px;width:400px;height:501px;background:#eaeaea;overflow:hidden;"><svg style="left:-530px;top:-111px" width="1230" height="935" viewBox="0 0 1230 935"><defs><linearGradient id="cpw" x1="0" y1="0" x2="1" y2="0"><stop offset="0" stop-color="#ffffff"/><stop offset="0.18" stop-color="#d8d0ff"/><stop offset="0.36" stop-color="#7f7cff"/><stop offset="0.52" stop-color="#1a52ff"/><stop offset="0.62" stop-color="#0038f0"/><stop offset="0.75" stop-color="#0020c8"/><stop offset="1" stop-color="#0012a4"/></linearGradient><linearGradient id="cpk" x1="0" y1="0" x2="0" y2="1"><stop offset="0" stop-color="#000" stop-opacity="0"/><stop offset="0.35" stop-color="#000" stop-opacity="0.42"/><stop offset="0.7" stop-color="#000" stop-opacity="0.8"/><stop offset="1" stop-color="#000" stop-opacity="1"/></linearGradient><radialGradient id="cpp" cx="0.62" cy="0.42" r="0.42"><stop offset="0" stop-color="#5a189e" stop-opacity="0.85"/><stop offset="0.6" stop-color="#4a1a90" stop-opacity="0.45"/><stop offset="1" stop-color="#40208a" stop-opacity="0"/></radialGradient><linearGradient id="cpt" x1="0" y1="0" x2="0" y2="1"><stop offset="0" stop-color="#d2d2e0"/><stop offset="0.1" stop-color="#b2b2ca"/><stop offset="0.36" stop-color="#b6b6cc"/><stop offset="0.5" stop-color="#d6d6e2"/><stop offset="1" stop-color="#eeeef4"/></linearGradient><linearGradient id="cpt2" x1="0" y1="0" x2="1" y2="0"><stop offset="0" stop-color="#fff" stop-opacity="0"/><stop offset="1" stop-color="#fff" stop-opacity="0.45"/></linearGradient></defs><polygon points="530,114 691.9,111.5 708.6,607.5 616,608.4 530,610" fill="#3b3b3b"/><polygon points="530,111 691.9,111 691.9,112 530,115.5" fill="#f4f4f4"/><polygon points="530,114.6 640,112.6 640,113.6 530,116.4" fill="#1c2c4c"/><polygon points="691.9,111 694.1,111 710.8,608 708.6,608" fill="#f3ece4"/><polygon points="530,453 532.6,453 534,522 530,522" fill="#e8eef8"/><polygon points="532.6,453 533.6,453 535,522 534,522" fill="#27407a"/><polygon points="530,536 535,536 536,606.5 530,606.5" fill="#fafafa"/><polygon points="535,536 536,536 537,606.5 536,606.5" fill="#27407a"/><polygon points="616,608.4 708.8,607.5 712,611.5 616,611.5" fill="#f2f0ec"/><polygon points="537.7,122.6 607.1,121.3 609.2,189.9 540.0,192.0" fill="#f8f8f8" /><polygon points="622.2,119.6 688.1,118.0 690.5,186.0 623.9,189.2" fill="#0a22b4" /><polygon points="540.1,203.9 609.6,202.3 611.2,270.6 542.1,273.0" fill="#dadadc" /><polygon points="623.9,201.5 690.9,198.6 692.8,267.4 625.8,270.1" fill="#88e628" /><polygon points="542.6,287.7 611.5,285.7 613.1,353.2 544.2,355.8" fill="#b9b9bd" /><polygon points="625.8,284.4 693.8,282.0 695.4,350.4 627.8,352.9" fill="#fb4a4a" /><polygon points="544.8,371.6 613.6,368.8 615.6,436.6 547.0,438.7" fill="#8d8d90" /><polygon points="628.3,367.5 695.7,365.1 697.4,433.4 630.4,435.8" fill="#ffec00" /><polygon points="547.4,455.0 616.4,452.4 618.2,518.0 549.7,520.9" fill="#5a5a5c" /><polygon points="630.7,450.4 698.2,448.5 699.8,516.3 632.0,518.8" fill="#ec2c9a" /><polygon points="549.4,534.7 618.5,532.6 620.1,602.5 550.7,604.6" fill="#242424" /><polygon points="632.6,533.4 700.9,531.5 702.2,600.9 633.1,602.5" fill="#169cff" /><g stroke="#666" stroke-width="1" fill="none"><circle cx="573.8" cy="150.5" r="3.6"/><path d="M570.2,150.5 h-4 M577.4,150.5 h4 M573.8,146.9 v-4 M573.8,154.1 v4"/></g><rect x="573.3" y="150.0" width="1" height="1" fill="#666"/><g stroke="#444" stroke-width="1" fill="none"><circle cx="578.3" cy="316.1" r="3.6"/><path d="M574.7,316.1 h-4 M581.9,316.1 h4 M578.3,312.5 v-4 M578.3,319.7 v4"/></g><rect x="577.8" y="315.6" width="1" height="1" fill="#444"/><g stroke="#d0d0d0" stroke-width="1" fill="none"><circle cx="580.6" cy="568.4" r="3.6"/><path d="M577.0,568.4 h-4 M584.2,568.4 h4 M580.6,564.8 v-4 M580.6,572.0 v4"/></g><rect x="580.1" y="567.9" width="1" height="1" fill="#d0d0d0"/><rect x="712" y="111" width="219" height="281" fill="#dddde5"/><rect x="712" y="111" width="3" height="281" fill="#b4b4c8"/><rect x="714.5" y="133" width="1.5" height="258" fill="#ececf2"/><rect x="714" y="111" width="217" height="21" fill="url(#cpt)"/><rect x="714" y="111" width="217" height="21" fill="url(#cpt2)"/><rect x="714" y="131.6" width="217" height="1.6" fill="#9c9cb2"/><rect x="714" y="133.2" width="217" height="1.2" fill="#f4f4f8"/><rect x="712" y="388.5" width="219" height="2.5" fill="#efeff4"/><rect x="722.4" y="158.2" width="209" height="207.6" fill="#9a9aa6"/><defs><linearGradient id="fb" gradientUnits="userSpaceOnUse" x1="15" y1="0" x2="915" y2="0"><stop offset="0" stop-color="#3060ff"/><stop offset="0.50" stop-color="#1050ff"/><stop offset="0.58" stop-color="#0844f8"/><stop offset="0.70" stop-color="#0024c8"/><stop offset="0.86" stop-color="#001aac"/><stop offset="1" stop-color="#001296"/></linearGradient><linearGradient id="fl" gradientUnits="userSpaceOnUse" x1="15" y1="0" x2="760" y2="0"><stop offset="0" stop-color="#ffffff"/><stop offset="0.25" stop-color="#cbc3ff"/><stop offset="0.50" stop-color="#857cff"/><stop offset="0.66" stop-color="#6f60f4"/><stop offset="0.85" stop-color="#6a44e8"/><stop offset="1" stop-color="#5a2cd8"/></linearGradient><linearGradient id="fk" gradientUnits="userSpaceOnUse" x1="0" y1="18" x2="0" y2="912"><stop offset="0" stop-color="#000" stop-opacity="0"/><stop offset="0.5" stop-color="#000" stop-opacity="0.42"/><stop offset="1" stop-color="#000" stop-opacity="1"/></linearGradient><radialGradient id="fglow" gradientUnits="userSpaceOnUse" cx="860" cy="560" r="330"><stop offset="0" stop-color="#0010b0" stop-opacity="0.55"/><stop offset="1" stop-color="#0010b0" stop-opacity="0"/></radialGradient><radialGradient id="fglow2" gradientUnits="userSpaceOnUse" cx="600" cy="120" r="260"><stop offset="0" stop-color="#0a4cff" stop-opacity="0.9"/><stop offset="0.5" stop-color="#0a40f0" stop-opacity="0.5"/><stop offset="1" stop-color="#0a40f0" stop-opacity="0"/></radialGradient><clipPath id="fleft"><path d="M-20,-20 L478,-20 C490,120 600,230 660,340 C720,440 700,540 720,620 L770,950 L-20,950 Z"/></clipPath><filter id="fblur2" x="-50%" y="-50%" width="200%" height="200%"><feGaussianBlur stdDeviation="30"/></filter><clipPath id="fclip"><rect x="15" y="18" width="900" height="894"/></clipPath><filter id="fblur" x="-10%" y="-10%" width="120%" height="120%"><feGaussianBlur stdDeviation="9"/></filter></defs><g transform="translate(720,155) scale(0.22995)"><g clip-path="url(#fclip)"><rect x="15" y="18" width="900" height="894" fill="url(#fb)"/><rect x="15" y="18" width="900" height="894" fill="url(#fglow2)"/><path filter="url(#fblur)" d="M-20,-20 L478,-20 C490,120 600,230 660,340 C720,440 700,540 720,620 L770,950 L-20,950 Z" fill="url(#fl)"/><path filter="url(#fblur2)" d="M520,190 C570,260 620,340 640,420 C660,500 670,580 690,700" fill="none" stroke="#6636e6" stroke-opacity="0.85" stroke-width="170" clip-path="url(#fleft)"/><ellipse cx="500" cy="30" rx="130" ry="110" fill="#3a62ff" fill-opacity="0.75" filter="url(#fblur2)"/><rect x="15" y="18" width="900" height="894" fill="url(#fk)"/><rect x="15" y="18" width="900" height="894" fill="url(#fglow)"/></g></g><rect x="722.4" y="365" width="209" height="1.2" fill="#f8f8fa"/><circle cx="746.8" cy="274.3" r="4" fill="none" stroke="#b8b8b8" stroke-width="1.1"/><rect x="722.6" y="373.3" width="10" height="9.4" fill="#eceef2" stroke="#5a84b4" stroke-width="1.1"/><defs><filter id="pzn" x="0" y="0" width="100%" height="100%" color-interpolation-filters="sRGB"><feTurbulence type="fractalNoise" baseFrequency="0.05" numOctaves="2" seed="11"/><feColorMatrix type="matrix" values="1 0 0 0 0  1 0 0 0 0  1 0 0 0 0  0 0 0 0 1"/><feComponentTransfer><feFuncR type="linear" slope="2.3" intercept="-0.65"/><feFuncG type="linear" slope="2.3" intercept="-0.65"/><feFuncB type="linear" slope="2.3" intercept="-0.65"/></feComponentTransfer><feComponentTransfer><feFuncR type="discrete" tableValues="0.769 0.769 0.282 0.910 0.282 0.769 0.706 0.706 0.282 0.690 0.690 0.282 0.910 0.769 0.659 0.282 0.333 0.333 0.282 0.769 0.910 0.282 0.706 0.706 0.282 0.769 0.690 0.282 0.910 0.769 0.282 0.659 0.333"/><feFuncG type="discrete" tableValues="0.643 0.643 0.227 0.839 0.227 0.643 0.314 0.314 0.227 0.549 0.549 0.227 0.839 0.643 0.627 0.227 0.333 0.333 0.227 0.643 0.839 0.227 0.314 0.314 0.227 0.643 0.549 0.227 0.839 0.643 0.227 0.627 0.333"/><feFuncB type="discrete" tableValues="0.361 0.361 0.149 0.541 0.149 0.361 0.173 0.173 0.149 0.282 0.282 0.149 0.541 0.361 0.518 0.149 0.427 0.427 0.149 0.361 0.541 0.149 0.173 0.173 0.149 0.361 0.282 0.149 0.541 0.361 0.149 0.518 0.427"/></feComponentTransfer></filter></defs><rect x="713" y="392" width="218" height="220" fill="#fff" filter="url(#pzn)"/><g transform="translate(710,390) scale(0.2406)"><clipPath id="pzc"><rect x="12" y="8" width="905" height="910"/></clipPath><g clip-path="url(#pzc)"><ellipse cx="205" cy="730" rx="175" ry="165" fill="#c6a659" fill-opacity="0.72"/><ellipse cx="800" cy="760" rx="120" ry="90" fill="#d2b468" fill-opacity="0.5"/><ellipse cx="150" cy="230" rx="140" ry="110" fill="#d0b062" fill-opacity="0.45"/><rect x="12" y="8" width="905" height="910" fill="#c0a060" fill-opacity="0.14"/><path d="M400,430 C440,420 480,440 520,430 C540,470 520,500 470,520 C450,540 455,560 480,570 C520,580 560,570 580,550 L600,580 C560,600 520,600 490,600 C470,620 480,640 440,650 C400,650 380,620 370,590 C340,570 320,540 330,500 C350,480 380,470 400,430 Z" fill="#51516b"/><path d="M350,130 C390,80 450,40 520,20 L600,20 C570,60 510,70 480,100 C440,140 400,160 360,170 Z" fill="#51516b"/><path d="M700,180 C730,150 790,160 820,180 C830,220 810,250 780,280 C750,290 710,270 700,250 C685,225 688,195 700,180 Z" fill="#51516b"/><path d="M800,560 C830,520 890,515 917,530 L917,640 C880,640 830,625 805,600 Z" fill="#51516b"/><path d="M610,830 C640,815 680,830 690,870 L660,915 L600,915 Z" fill="#51516b"/><path d="M70,610 C100,600 130,625 125,665 C105,690 75,680 62,655 Z" fill="#51516b"/><path d="M700,445 C725,438 750,452 750,478 C728,492 705,485 695,468 Z" fill="#51516b"/><path d="M870,25 C895,15 917,35 917,60 L917,110 C885,100 870,70 870,25 Z" fill="#51516b"/><path d="M45,560 C45,505 90,478 135,468 L142,498 C108,508 82,540 82,598 C82,634 62,645 45,636 Z" fill="#b4502c"/><path d="M160,25 H245 V105 H160 Z" fill="#b4502c"/><path d="M840,40 C875,40 917,75 917,110 L917,140 C875,132 848,90 840,40 Z" fill="#b4502c"/><path d="M390,650 C445,700 520,715 595,700 L595,730 C512,748 428,722 372,672 Z" fill="#b4502c"/><path d="M850,650 C885,668 917,705 917,755 L888,770 C868,728 850,692 832,675 Z" fill="#b4502c"/><path d="M340,260 C360,200 420,150 480,130 C540,110 600,130 620,180" fill="none" stroke="#4c3c1e" stroke-width="24" stroke-linecap="round"/><path d="M340,260 C360,200 420,150 480,130 C540,110 600,130 620,180" fill="none" stroke="#e4d084" stroke-width="18" stroke-linecap="round"/><path d="M340,260 C360,200 420,150 480,130 C540,110 600,130 620,180" fill="none" stroke="#7a5c24" stroke-width="8" stroke-dasharray="7 9" stroke-linecap="round"/><path d="M370,230 C350,300 380,380 420,420 C450,450 440,490 400,500" fill="none" stroke="#4c3c1e" stroke-width="24" stroke-linecap="round"/><path d="M370,230 C350,300 380,380 420,420 C450,450 440,490 400,500" fill="none" stroke="#e4d084" stroke-width="18" stroke-linecap="round"/><path d="M370,230 C350,300 380,380 420,420 C450,450 440,490 400,500" fill="none" stroke="#7a5c24" stroke-width="8" stroke-dasharray="7 9" stroke-linecap="round"/><path d="M450,560 C500,540 560,560 600,600 C660,650 740,640 800,580" fill="none" stroke="#4c3c1e" stroke-width="24" stroke-linecap="round"/><path d="M450,560 C500,540 560,560 600,600 C660,650 740,640 800,580" fill="none" stroke="#e4d084" stroke-width="18" stroke-linecap="round"/><path d="M450,560 C500,540 560,560 600,600 C660,650 740,640 800,580" fill="none" stroke="#7a5c24" stroke-width="8" stroke-dasharray="7 9" stroke-linecap="round"/><path d="M520,250 C600,330 680,420 740,470" fill="none" stroke="#4c3c1e" stroke-width="24" stroke-linecap="round"/><path d="M520,250 C600,330 680,420 740,470" fill="none" stroke="#e4d084" stroke-width="18" stroke-linecap="round"/><path d="M520,250 C600,330 680,420 740,470" fill="none" stroke="#7a5c24" stroke-width="8" stroke-dasharray="7 9" stroke-linecap="round"/><path d="M20,520 C60,470 140,420 220,370 C260,340 290,320 300,290" fill="none" stroke="#4c3c1e" stroke-width="24" stroke-linecap="round"/><path d="M20,520 C60,470 140,420 220,370 C260,340 290,320 300,290" fill="none" stroke="#e4d084" stroke-width="18" stroke-linecap="round"/><path d="M20,520 C60,470 140,420 220,370 C260,340 290,320 300,290" fill="none" stroke="#7a5c24" stroke-width="8" stroke-dasharray="7 9" stroke-linecap="round"/><path d="M370,620 C400,660 470,670 530,650" fill="none" stroke="#4c3c1e" stroke-width="24" stroke-linecap="round"/><path d="M370,620 C400,660 470,670 530,650" fill="none" stroke="#e4d084" stroke-width="18" stroke-linecap="round"/><path d="M370,620 C400,660 470,670 530,650" fill="none" stroke="#7a5c24" stroke-width="8" stroke-dasharray="7 9" stroke-linecap="round"/><path d="M560,80 C640,30 720,30 770,80 C800,110 790,150 760,160" fill="none" stroke="#4c3c1e" stroke-width="24" stroke-linecap="round"/><path d="M560,80 C640,30 720,30 770,80 C800,110 790,150 760,160" fill="none" stroke="#e4d084" stroke-width="18" stroke-linecap="round"/><path d="M560,80 C640,30 720,30 770,80 C800,110 790,150 760,160" fill="none" stroke="#7a5c24" stroke-width="8" stroke-dasharray="7 9" stroke-linecap="round"/><path d="M800,20 C800,100 850,150 917,160" fill="none" stroke="#4c3c1e" stroke-width="24" stroke-linecap="round"/><path d="M800,20 C800,100 850,150 917,160" fill="none" stroke="#e4d084" stroke-width="18" stroke-linecap="round"/><path d="M800,20 C800,100 850,150 917,160" fill="none" stroke="#7a5c24" stroke-width="8" stroke-dasharray="7 9" stroke-linecap="round"/><path d="M750,400 C800,360 870,380 890,440 C900,500 860,540 800,540" fill="none" stroke="#4c3c1e" stroke-width="24" stroke-linecap="round"/><path d="M750,400 C800,360 870,380 890,440 C900,500 860,540 800,540" fill="none" stroke="#e4d084" stroke-width="18" stroke-linecap="round"/><path d="M750,400 C800,360 870,380 890,440 C900,500 860,540 800,540" fill="none" stroke="#7a5c24" stroke-width="8" stroke-dasharray="7 9" stroke-linecap="round"/><path d="M540,915 C560,800 620,740 700,700 C780,660 860,680 917,640" fill="none" stroke="#4c3c1e" stroke-width="24" stroke-linecap="round"/><path d="M540,915 C560,800 620,740 700,700 C780,660 860,680 917,640" fill="none" stroke="#e4d084" stroke-width="18" stroke-linecap="round"/><path d="M540,915 C560,800 620,740 700,700 C780,660 860,680 917,640" fill="none" stroke="#7a5c24" stroke-width="8" stroke-dasharray="7 9" stroke-linecap="round"/><path d="M160,460 C200,540 280,590 360,600" fill="none" stroke="#4c3c1e" stroke-width="24" stroke-linecap="round"/><path d="M160,460 C200,540 280,590 360,600" fill="none" stroke="#e4d084" stroke-width="18" stroke-linecap="round"/><path d="M160,460 C200,540 280,590 360,600" fill="none" stroke="#7a5c24" stroke-width="8" stroke-dasharray="7 9" stroke-linecap="round"/><path d="M20,700 C80,760 160,800 240,915" fill="none" stroke="#4c3c1e" stroke-width="24" stroke-linecap="round"/><path d="M20,700 C80,760 160,800 240,915" fill="none" stroke="#e4d084" stroke-width="18" stroke-linecap="round"/><path d="M20,700 C80,760 160,800 240,915" fill="none" stroke="#7a5c24" stroke-width="8" stroke-dasharray="7 9" stroke-linecap="round"/><path d="M230,700 C300,690 360,730 360,800 C360,860 300,880 260,850" fill="none" stroke="#4c3c1e" stroke-width="24" stroke-linecap="round"/><path d="M230,700 C300,690 360,730 360,800 C360,860 300,880 260,850" fill="none" stroke="#e4d084" stroke-width="18" stroke-linecap="round"/><path d="M230,700 C300,690 360,730 360,800 C360,860 300,880 260,850" fill="none" stroke="#7a5c24" stroke-width="8" stroke-dasharray="7 9" stroke-linecap="round"/><path d="M120,620 C170,610 220,650 210,700 C200,740 150,740 140,700" fill="none" stroke="#4c3c1e" stroke-width="24" stroke-linecap="round"/><path d="M120,620 C170,610 220,650 210,700 C200,740 150,740 140,700" fill="none" stroke="#e4d084" stroke-width="18" stroke-linecap="round"/><path d="M120,620 C170,610 220,650 210,700 C200,740 150,740 140,700" fill="none" stroke="#7a5c24" stroke-width="8" stroke-dasharray="7 9" stroke-linecap="round"/><path d="M500,290 C580,360 660,450 720,500" fill="none" stroke="#3e3e58" stroke-width="16" stroke-dasharray="10 14"/><path d="M470,330 C540,390 620,470 680,530" fill="none" stroke="#b4502c" stroke-width="14" stroke-dasharray="12 10"/><path d="M30,300 C100,260 180,250 260,180" fill="none" stroke="#b4502c" stroke-width="40" stroke-dasharray="10 14"/><path d="M30,340 C110,300 200,280 290,200" fill="none" stroke="#e4d084" stroke-width="18" stroke-dasharray="14 10"/><path d="M700,760 C760,800 840,820 917,800" fill="none" stroke="#b4502c" stroke-width="46" stroke-dasharray="10 16"/><path d="M690,820 C760,860 840,880 917,860" fill="none" stroke="#e4d084" stroke-width="20" stroke-dasharray="16 10"/><path d="M15,200 C100,200 250,160 330,90 C380,50 420,30 450,10" fill="none" stroke="#5a2a18" stroke-width="11"/><path d="M15,200 C100,200 250,160 330,90 C380,50 420,30 450,10" fill="none" stroke="#b04a2a" stroke-width="7"/><path d="M40,470 C80,380 160,320 280,290 C400,270 520,250 580,190 C620,150 620,80 590,30" fill="none" stroke="#5a2a18" stroke-width="11"/><path d="M40,470 C80,380 160,320 280,290 C400,270 520,250 580,190 C620,150 620,80 590,30" fill="none" stroke="#b04a2a" stroke-width="7"/><path d="M917,370 C840,370 770,400 740,470 C710,560 700,700 700,780 C690,850 640,900 600,915" fill="none" stroke="#5a2a18" stroke-width="11"/><path d="M917,370 C840,370 770,400 740,470 C710,560 700,700 700,780 C690,850 640,900 600,915" fill="none" stroke="#b04a2a" stroke-width="7"/><path d="M917,620 C860,680 820,740 810,800 C800,860 810,900 820,915" fill="none" stroke="#5a2a18" stroke-width="11"/><path d="M917,620 C860,680 820,740 810,800 C800,860 810,900 820,915" fill="none" stroke="#b04a2a" stroke-width="7"/><g fill="#f4ecd0"><circle cx="178" cy="42" r="5"/><circle cx="202" cy="42" r="5"/><circle cx="226" cy="42" r="5"/><circle cx="178" cy="65" r="5"/><circle cx="202" cy="65" r="5"/><circle cx="226" cy="65" r="5"/><circle cx="178" cy="88" r="5"/><circle cx="202" cy="88" r="5"/><circle cx="226" cy="88" r="5"/></g></g><path d="M408.5,531 V595 M376.5,563 H440.5" stroke="#fff" stroke-width="10.5" fill="none"/></g><g fill="none" stroke-width="1" ><path id="ants" d="M530.5,111.5 H698.3 L702.2,222 L705.6,335 L707.4,395.5 H713.5 V391.5 H929.5 V611.5 H530.5 Z" stroke="#fff"/><path d="M530.5,111.5 H698.3 L702.2,222 L705.6,335 L707.4,395.5 H713.5 V391.5 H929.5 V611.5 H530.5 Z" stroke="#000" stroke-dasharray="4 4"/></g></svg><span class="t" style="left:49.00px;top:44.00px;font-size:9px;color:#666;">1</span><span class="t" style="left:53.00px;top:210.00px;font-size:9px;color:#444;">3</span><span class="t" style="left:55.00px;top:462.00px;font-size:9px;color:#d0d0d0;">2</span><span class="t" style="left:188.00px;top:3.00px;font-size:16px;color:#111;letter-spacing:-0.523px;font-weight:bold;">Color Picker</span><span class="t" style="left:191.00px;top:31.00px;font-size:11px;color:#333;letter-spacing:-0.369px;">Select foreground color:</span><span class="t" style="left:205.00px;top:263.00px;font-size:11px;color:#333;letter-spacing:-0.715px;">Only Web Colors</span></div>
</body></html>
